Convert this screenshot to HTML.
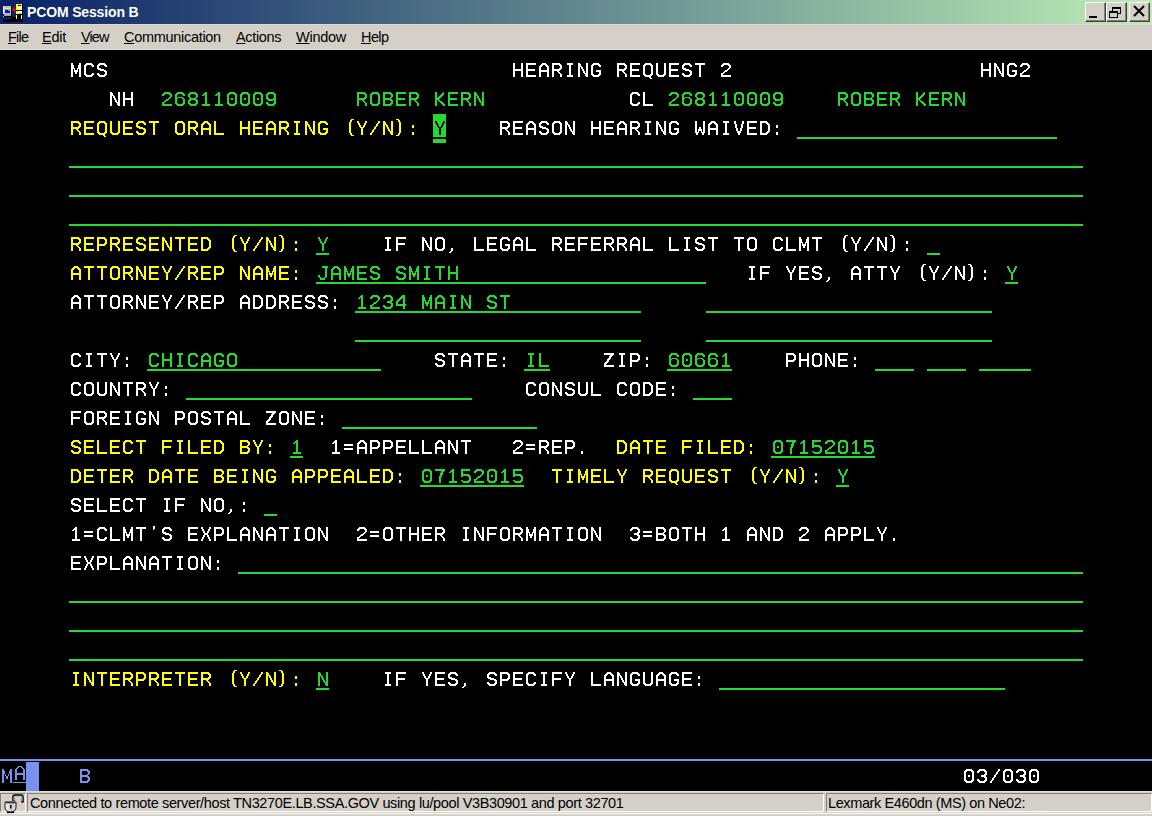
<!DOCTYPE html>
<html><head><meta charset="utf-8"><style>
*{margin:0;padding:0;box-sizing:border-box}
html,body{width:1152px;height:816px;overflow:hidden;background:#000;position:relative}
.title{position:absolute;left:0;top:0;width:1152px;height:24px;background:linear-gradient(to right,rgb(8,33,103),rgb(190,237,182))}
.ttxt{position:absolute;left:27px;top:4px;font:bold 14px "Liberation Sans",sans-serif;letter-spacing:-0.15px;color:#fff;white-space:pre}
.menu{position:absolute;left:0;top:24px;width:1152px;height:26px;background:#d4d0c8;border-top:1px solid #dedad2;border-bottom:1px solid #e6e3dd;font:14.5px "Liberation Sans",sans-serif;color:#000}
.menu span{position:absolute;top:4px;white-space:pre}
.menu u{text-decoration:underline}
.t{position:absolute;font:21.3px "Liberation Mono",sans-serif;letter-spacing:0.218px;text-rendering:geometricPrecision;line-height:29px;height:29px;white-space:pre;margin-top:2px}
.u{position:absolute;height:2px;background:#24d92f}
.cur{position:absolute;width:13px;background:#24d92f}
.status{position:absolute;left:0;top:791px;width:1152px;height:25px;background:#d4d0c8;border-top:1px solid #e2dfd8;font:14.5px "Liberation Sans",sans-serif;color:#000}
.pn{position:absolute;top:1px;height:19px;border-top:1px solid #808080;border-left:1px solid #808080;border-right:1px solid #fff;border-bottom:1px solid #fff}
.btn{position:absolute;top:2px;width:21px;height:20px;background:#d4d0c8;border-top:1px solid #fff;border-left:1px solid #fff;border-right:1px solid #404040;border-bottom:1px solid #404040;box-shadow:inset -1px -1px 0 #808080}
</style></head><body>
<div class="title">
<svg style="position:absolute;left:0;top:0" width="24" height="24" viewBox="0 0 24 24" shape-rendering="crispEdges">
<rect x="3" y="19" width="20" height="3" fill="#000"/>
<rect x="11" y="17" width="12" height="2" fill="#000"/>
<rect x="3" y="6" width="9" height="11" fill="#000"/>
<rect x="3" y="6" width="8" height="8" fill="#c8c4bc"/>
<rect x="3" y="6" width="1" height="8" fill="#f0f0f0"/>
<rect x="5" y="8" width="5" height="5" fill="#0000ff"/>
<rect x="5" y="8" width="5" height="1" fill="#ffffff"/>
<rect x="6" y="9" width="3" height="1" fill="#00ff00"/>
<rect x="8" y="9" width="2" height="2" fill="#00ff00"/>
<rect x="5" y="9" width="1" height="2" fill="#ff3000"/>
<rect x="4" y="14" width="7" height="2" fill="#a8a8a8"/>
<rect x="3" y="16" width="1" height="1" fill="#c0c0c0"/>
<path d="M12 10.5 L13.5 8 L14.5 11.5 L16 8.5" stroke="#ff0000" stroke-width="1.3" fill="none" shape-rendering="auto"/>
<rect x="16" y="4" width="7" height="15" fill="#000"/>
<rect x="16" y="4" width="6" height="6" fill="#ffff00"/>
<rect x="18" y="6" width="4" height="3" fill="#ffffff"/>
<rect x="18" y="5" width="3" height="1" fill="#000"/>
<rect x="16" y="11" width="6" height="3" fill="#ffff00"/>
<rect x="18" y="11" width="4" height="2" fill="#ffffff"/>
<rect x="19" y="13" width="2" height="1" fill="#00ff00"/>
<rect x="16" y="15" width="1" height="4" fill="#ffff00"/>
<rect x="21" y="15" width="1" height="4" fill="#ffff00"/>
<rect x="16" y="16" width="1" height="2" fill="#ffffff"/>
<rect x="21" y="16" width="1" height="2" fill="#ffffff"/>
</svg>
<div class="ttxt">PCOM Session B</div>
<div class="btn" style="left:1085px"><div style="position:absolute;left:3px;top:13px;width:8px;height:2px;background:#000"></div></div>
<div class="btn" style="left:1106px"><svg style="position:absolute;left:1px;top:3px" width="16" height="14" shape-rendering="crispEdges"><rect x="4" y="1" width="9" height="2" fill="#000"/><rect x="4" y="1" width="1" height="4" fill="#000"/><rect x="12" y="1" width="1" height="7" fill="#000"/><rect x="10" y="7" width="3" height="1" fill="#000"/><rect x="1" y="5" width="9" height="2" fill="#000"/><rect x="1" y="5" width="1" height="7" fill="#000"/><rect x="9" y="5" width="1" height="7" fill="#000"/><rect x="1" y="11" width="9" height="1" fill="#000"/></svg></div>
<div class="btn" style="left:1129px"><svg style="position:absolute;left:3px;top:2px" width="14" height="14"><path d="M1 1L11 11M11 1L1 11" stroke="#000" stroke-width="2" fill="none"/></svg></div>
</div>
<div class="menu">
<span style="left:8px;letter-spacing:-0.8px"><u>F</u>ile</span>
<span style="left:42px;letter-spacing:-0.2px"><u>E</u>dit</span>
<span style="left:81px;letter-spacing:-0.9px"><u>V</u>iew</span>
<span style="left:124px;letter-spacing:-0.3px"><u>C</u>ommunication</span>
<span style="left:236px;letter-spacing:-0.35px"><u>A</u>ctions</span>
<span style="left:296px;letter-spacing:-0.25px"><u>W</u>indow</span>
<span style="left:361px;letter-spacing:-0.6px"><u>H</u>elp</span>
</div>
<div class="u" style="top:137px;left:797px;width:260px"></div>
<div class="u" style="top:166px;left:69px;width:1014px"></div>
<div class="u" style="top:195px;left:69px;width:1014px"></div>
<div class="u" style="top:224px;left:69px;width:1014px"></div>
<div class="u" style="top:253px;left:316px;width:13px"></div>
<div class="u" style="top:253px;left:927px;width:13px"></div>
<div class="u" style="top:282px;left:316px;width:390px"></div>
<div class="u" style="top:282px;left:1005px;width:13px"></div>
<div class="u" style="top:311px;left:355px;width:286px"></div>
<div class="u" style="top:311px;left:706px;width:286px"></div>
<div class="u" style="top:340px;left:355px;width:286px"></div>
<div class="u" style="top:340px;left:706px;width:286px"></div>
<div class="u" style="top:369px;left:147px;width:234px"></div>
<div class="u" style="top:369px;left:524px;width:26px"></div>
<div class="u" style="top:369px;left:667px;width:65px"></div>
<div class="u" style="top:369px;left:875px;width:39px"></div>
<div class="u" style="top:369px;left:927px;width:39px"></div>
<div class="u" style="top:369px;left:979px;width:52px"></div>
<div class="u" style="top:398px;left:186px;width:286px"></div>
<div class="u" style="top:398px;left:693px;width:39px"></div>
<div class="u" style="top:427px;left:342px;width:195px"></div>
<div class="u" style="top:456px;left:290px;width:13px"></div>
<div class="u" style="top:456px;left:771px;width:104px"></div>
<div class="u" style="top:485px;left:420px;width:104px"></div>
<div class="u" style="top:485px;left:836px;width:13px"></div>
<div class="u" style="top:514px;left:264px;width:13px"></div>
<div class="u" style="top:572px;left:238px;width:845px"></div>
<div class="u" style="top:601px;left:69px;width:1014px"></div>
<div class="u" style="top:630px;left:69px;width:1014px"></div>
<div class="u" style="top:659px;left:69px;width:1014px"></div>
<div class="u" style="top:688px;left:316px;width:13px"></div>
<div class="u" style="top:688px;left:719px;width:286px"></div><div class="cur" style="top:114px;left:433px;height:23px"></div>
<div class="cur" style="top:139px;left:433px;height:4px"></div>
<div style="position:absolute;left:0;top:759px;width:1152px;height:2px;background:#7890ee"></div>
<div style="position:absolute;left:13px;top:782px;width:13px;height:1px;background:#7890ee"></div>
<div style="position:absolute;left:26px;top:762px;width:13px;height:29px;background:#7890ee"></div>
<svg style="position:absolute;left:0;top:0" width="1152" height="816" shape-rendering="crispEdges"><defs><symbol id="g39" overflow="visible"><path d="M4 -1h2v3h-2zM4 2h1v1h-1z"/></symbol><symbol id="g40" overflow="visible"><path d="M7 -2h3v1h-3zM7 14h3v1h-3zM6 -1h2v2h-2zM6 12h2v2h-2zM5 1h2v11h-2z"/></symbol><symbol id="g41" overflow="visible"><path d="M0 -2h3v1h-3zM0 14h3v1h-3zM2 -1h2v2h-2zM2 12h2v2h-2zM3 1h2v11h-2z"/></symbol><symbol id="g44" overflow="visible"><path d="M3 11h2v3h-2zM2 14h2v1h-2zM1 15h2v1h-2z"/></symbol><symbol id="g46" overflow="visible"><path d="M3 11h2v3h-2z"/></symbol><symbol id="g47" overflow="visible"><path d="M8 0h2v2h-2zM7 2h2v1h-2zM6 3h2v2h-2zM5 5h2v1h-2zM4 6h2v2h-2zM3 8h2v1h-2zM2 9h2v2h-2zM1 11h2v1h-2zM0 12h2v2h-2z"/></symbol><symbol id="g48" overflow="visible"><path d="M2 0h6v1h-6zM2 13h6v1h-6zM1 1h8v1h-8zM1 12h8v1h-8zM0 2h3v1h-3zM0 11h3v1h-3zM7 2h3v1h-3zM7 11h3v1h-3zM0 3h2v8h-2zM8 3h2v8h-2zM4 6h2v2h-2z"/></symbol><symbol id="g49" overflow="visible"><path d="M4 0h2v1h-2zM4 3h2v9h-2zM3 1h3v1h-3zM2 2h4v1h-4zM1 3h2v1h-2zM1 12h8v2h-8z"/></symbol><symbol id="g50" overflow="visible"><path d="M2 0h6v1h-6zM1 1h8v1h-8zM0 2h3v1h-3zM0 10h3v1h-3zM7 2h3v1h-3zM0 3h2v1h-2zM0 11h2v1h-2zM8 3h2v2h-2zM7 5h2v1h-2zM6 6h2v1h-2zM4 7h3v1h-3zM3 8h3v1h-3zM2 9h2v1h-2zM0 12h10v2h-10z"/></symbol><symbol id="g51" overflow="visible"><path d="M2 0h6v1h-6zM2 13h6v1h-6zM1 1h8v1h-8zM1 12h8v1h-8zM0 2h3v1h-3zM0 11h3v1h-3zM7 2h3v1h-3zM7 5h3v1h-3zM7 8h3v1h-3zM7 11h3v1h-3zM0 3h2v1h-2zM0 10h2v1h-2zM8 3h2v2h-2zM8 9h2v2h-2zM4 6h5v2h-5z"/></symbol><symbol id="g52" overflow="visible"><path d="M6 0h3v1h-3zM5 1h4v1h-4zM4 2h5v1h-5zM3 3h3v1h-3zM7 3h2v6h-2zM7 11h2v3h-2zM2 4h3v1h-3zM1 5h3v1h-3zM0 6h3v1h-3zM0 7h2v2h-2zM0 9h10v2h-10z"/></symbol><symbol id="g53" overflow="visible"><path d="M0 0h9v2h-9zM0 6h9v1h-9zM0 2h2v3h-2zM0 7h2v1h-2zM0 11h2v1h-2zM0 5h8v1h-8zM7 7h3v1h-3zM7 11h3v1h-3zM8 8h2v3h-2zM1 12h8v1h-8zM2 13h6v1h-6z"/></symbol><symbol id="g54" overflow="visible"><path d="M2 0h6v1h-6zM2 13h6v1h-6zM1 1h8v1h-8zM1 12h8v1h-8zM0 2h3v1h-3zM0 6h3v1h-3zM0 11h3v1h-3zM7 2h3v1h-3zM7 11h3v1h-3zM0 3h2v3h-2zM0 7h2v4h-2zM8 3h2v1h-2zM8 7h2v4h-2zM3 5h5v1h-5zM7 6h2v1h-2z"/></symbol><symbol id="g55" overflow="visible"><path d="M0 0h10v2h-10zM6 2h3v1h-3zM6 3h2v1h-2zM5 4h3v2h-3zM5 6h2v1h-2zM4 7h3v1h-3zM4 8h2v6h-2z"/></symbol><symbol id="g56" overflow="visible"><path d="M2 0h6v1h-6zM2 6h6v1h-6zM2 13h6v1h-6zM1 1h8v1h-8zM1 7h8v1h-8zM1 12h8v1h-8zM0 2h3v1h-3zM0 8h3v1h-3zM0 11h3v1h-3zM7 2h3v1h-3zM7 8h3v1h-3zM7 11h3v1h-3zM0 3h2v2h-2zM0 9h2v2h-2zM8 3h2v2h-2zM8 9h2v2h-2zM1 5h2v1h-2zM7 5h2v1h-2z"/></symbol><symbol id="g57" overflow="visible"><path d="M2 0h6v1h-6zM2 13h6v1h-6zM1 1h8v1h-8zM1 12h8v1h-8zM0 2h3v1h-3zM0 6h3v1h-3zM0 11h3v1h-3zM7 2h3v1h-3zM7 6h3v1h-3zM7 11h3v1h-3zM0 3h2v3h-2zM0 10h2v1h-2zM8 3h2v3h-2zM8 8h2v3h-2zM1 7h9v1h-9zM2 8h5v1h-5z"/></symbol><symbol id="g58" overflow="visible"><path d="M3 4h2v3h-2zM3 11h2v3h-2z"/></symbol><symbol id="g61" overflow="visible"><path d="M0 4h9v2h-9zM0 8h9v2h-9z"/></symbol><symbol id="g65" overflow="visible"><path d="M3 0h4v1h-4zM2 1h6v1h-6zM1 2h3v1h-3zM6 2h3v1h-3zM0 3h3v1h-3zM7 3h3v1h-3zM0 4h2v3h-2zM0 9h2v5h-2zM8 4h2v3h-2zM8 9h2v5h-2zM0 7h10v2h-10z"/></symbol><symbol id="g66" overflow="visible"><path d="M0 0h8v1h-8zM0 6h8v1h-8zM0 13h8v1h-8zM0 1h9v1h-9zM0 7h9v1h-9zM0 12h9v1h-9zM0 2h2v4h-2zM0 8h2v4h-2zM7 2h3v1h-3zM7 8h3v1h-3zM7 11h3v1h-3zM8 3h2v2h-2zM8 9h2v2h-2zM7 5h2v1h-2z"/></symbol><symbol id="g67" overflow="visible"><path d="M2 0h6v1h-6zM2 13h6v1h-6zM1 1h8v1h-8zM1 12h8v1h-8zM0 2h3v1h-3zM0 11h3v1h-3zM7 2h3v1h-3zM7 11h3v1h-3zM0 3h2v8h-2zM8 3h2v1h-2zM8 10h2v1h-2z"/></symbol><symbol id="g68" overflow="visible"><path d="M0 0h7v1h-7zM0 13h7v1h-7zM0 1h8v1h-8zM0 12h8v1h-8zM0 2h2v10h-2zM6 2h3v1h-3zM6 11h3v1h-3zM7 3h3v1h-3zM7 10h3v1h-3zM8 4h2v6h-2z"/></symbol><symbol id="g69" overflow="visible"><path d="M0 0h10v2h-10zM0 12h10v2h-10zM0 2h2v4h-2zM0 8h2v4h-2zM0 6h9v2h-9z"/></symbol><symbol id="g70" overflow="visible"><path d="M0 0h10v2h-10zM0 2h2v4h-2zM0 8h2v6h-2zM0 6h9v2h-9z"/></symbol><symbol id="g71" overflow="visible"><path d="M2 0h6v1h-6zM2 13h6v1h-6zM1 1h8v1h-8zM1 12h8v1h-8zM0 2h3v1h-3zM0 11h3v1h-3zM7 2h3v1h-3zM7 11h3v1h-3zM0 3h2v8h-2zM8 3h2v1h-2zM8 9h2v2h-2zM5 7h5v2h-5z"/></symbol><symbol id="g72" overflow="visible"><path d="M0 0h2v6h-2zM0 8h2v6h-2zM8 0h2v6h-2zM8 8h2v6h-2zM0 6h10v2h-10z"/></symbol><symbol id="g73" overflow="visible"><path d="M2 0h6v2h-6zM2 12h6v2h-6zM4 2h2v10h-2z"/></symbol><symbol id="g74" overflow="visible"><path d="M4 0h6v2h-6zM7 2h2v9h-2zM0 9h2v2h-2zM1 11h2v1h-2zM6 11h2v1h-2zM2 12h5v2h-5z"/></symbol><symbol id="g75" overflow="visible"><path d="M0 0h2v6h-2zM0 8h2v6h-2zM8 0h1v1h-1zM7 1h2v1h-2zM6 2h3v1h-3zM6 11h3v1h-3zM5 3h3v1h-3zM5 10h3v1h-3zM4 4h3v1h-3zM4 9h3v1h-3zM3 5h3v1h-3zM0 6h5v1h-5zM0 7h4v1h-4zM3 8h2v1h-2zM7 12h3v1h-3zM8 13h2v1h-2z"/></symbol><symbol id="g76" overflow="visible"><path d="M0 0h2v12h-2zM0 12h10v2h-10z"/></symbol><symbol id="g77" overflow="visible"><path d="M0 0h2v2h-2zM0 6h2v8h-2zM8 0h2v2h-2zM8 6h2v8h-2zM0 2h3v3h-3zM7 2h3v3h-3zM0 5h4v1h-4zM6 5h4v1h-4zM3 6h1v1h-1zM6 6h1v1h-1zM3 7h4v2h-4zM4 9h2v2h-2z"/></symbol><symbol id="g78" overflow="visible"><path d="M0 0h2v1h-2zM0 4h2v10h-2zM8 0h2v10h-2zM8 13h2v1h-2zM0 1h3v2h-3zM0 3h4v1h-4zM3 4h2v2h-2zM4 6h2v2h-2zM5 8h2v2h-2zM6 10h4v1h-4zM7 11h3v2h-3z"/></symbol><symbol id="g79" overflow="visible"><path d="M2 0h6v1h-6zM2 13h6v1h-6zM1 1h8v1h-8zM1 12h8v1h-8zM0 2h3v1h-3zM0 11h3v1h-3zM7 2h3v1h-3zM7 11h3v1h-3zM0 3h2v8h-2zM8 3h2v8h-2z"/></symbol><symbol id="g80" overflow="visible"><path d="M0 0h8v1h-8zM0 8h8v1h-8zM0 1h9v1h-9zM0 7h9v1h-9zM0 2h2v5h-2zM0 9h2v5h-2zM7 2h3v1h-3zM7 6h3v1h-3zM8 3h2v3h-2z"/></symbol><symbol id="g81" overflow="visible"><path d="M2 0h6v1h-6zM2 13h6v1h-6zM1 1h8v1h-8zM1 12h8v1h-8zM0 2h3v1h-3zM0 11h3v1h-3zM7 2h3v1h-3zM7 11h3v1h-3zM0 3h2v8h-2zM8 3h2v8h-2zM6 14h2v1h-2zM7 15h2v1h-2z"/></symbol><symbol id="g82" overflow="visible"><path d="M0 0h8v1h-8zM0 7h8v1h-8zM0 1h9v1h-9zM0 6h9v1h-9zM0 2h2v4h-2zM0 8h2v6h-2zM7 2h3v1h-3zM7 5h3v1h-3zM8 3h2v2h-2zM8 11h2v3h-2zM5 8h2v1h-2zM6 9h2v1h-2zM7 10h2v1h-2z"/></symbol><symbol id="g83" overflow="visible"><path d="M2 0h6v1h-6zM2 13h6v1h-6zM1 1h8v1h-8zM1 12h8v1h-8zM0 2h3v1h-3zM0 11h3v1h-3zM7 2h3v1h-3zM7 8h3v1h-3zM7 11h3v1h-3zM0 3h2v2h-2zM0 10h2v1h-2zM8 3h2v1h-2zM8 9h2v2h-2zM0 5h4v1h-4zM1 6h6v1h-6zM3 7h6v1h-6z"/></symbol><symbol id="g84" overflow="visible"><path d="M0 0h10v2h-10zM4 2h2v12h-2z"/></symbol><symbol id="g85" overflow="visible"><path d="M0 0h2v11h-2zM8 0h2v11h-2zM0 11h3v1h-3zM7 11h3v1h-3zM1 12h8v1h-8zM2 13h6v1h-6z"/></symbol><symbol id="g86" overflow="visible"><path d="M0 0h2v3h-2zM8 0h2v3h-2zM1 3h2v4h-2zM7 3h2v4h-2zM2 7h2v3h-2zM6 7h2v3h-2zM3 10h4v2h-4zM4 12h2v2h-2z"/></symbol><symbol id="g87" overflow="visible"><path d="M0 0h2v11h-2zM8 0h2v11h-2zM4 6h2v2h-2zM3 8h4v2h-4zM3 10h1v1h-1zM6 10h1v1h-1zM0 11h4v1h-4zM6 11h4v1h-4zM1 12h2v2h-2zM7 12h2v2h-2z"/></symbol><symbol id="g88" overflow="visible"><path d="M0 0h2v2h-2zM0 12h2v2h-2zM8 0h2v2h-2zM8 12h2v2h-2zM1 2h2v2h-2zM1 10h2v2h-2zM7 2h2v2h-2zM7 10h2v2h-2zM2 4h2v2h-2zM2 8h2v2h-2zM6 4h2v2h-2zM6 8h2v2h-2zM3 6h4v2h-4z"/></symbol><symbol id="g89" overflow="visible"><path d="M0 0h2v2h-2zM8 0h2v2h-2zM1 2h2v2h-2zM7 2h2v2h-2zM2 4h2v2h-2zM6 4h2v2h-2zM3 6h4v1h-4zM4 7h2v7h-2z"/></symbol><symbol id="g90" overflow="visible"><path d="M0 0h10v2h-10zM0 12h10v2h-10zM6 2h3v1h-3zM5 3h3v1h-3zM5 4h2v1h-2zM4 5h3v1h-3zM3 6h3v1h-3zM3 7h2v1h-2zM2 8h3v1h-3zM1 9h3v1h-3zM0 10h3v1h-3zM0 11h2v1h-2z"/></symbol><symbol id="g97" overflow="visible"><path d="M3 -3h4v1h-4zM2 -2h2v1h-2zM6 -2h2v1h-2zM1 -1h2v1h-2zM7 -1h2v1h-2zM0 0h2v4h-2zM0 6h2v5h-2zM8 0h2v4h-2zM8 6h2v5h-2zM0 4h10v2h-10z"/></symbol><symbol id="g109" overflow="visible"><path d="M0 0h2v2h-2zM0 5h2v9h-2zM8 0h2v2h-2zM8 5h2v9h-2zM0 2h3v3h-3zM7 2h3v3h-3zM3 5h1v2h-1zM6 5h1v2h-1zM4 7h2v3h-2z"/></symbol></defs><use href="#g77" x="71" y="63" fill="#ffffff"/><use href="#g67" x="84" y="63" fill="#ffffff"/><use href="#g83" x="97" y="63" fill="#ffffff"/><use href="#g72" x="513" y="63" fill="#ffffff"/><use href="#g69" x="526" y="63" fill="#ffffff"/><use href="#g65" x="539" y="63" fill="#ffffff"/><use href="#g82" x="552" y="63" fill="#ffffff"/><use href="#g73" x="565" y="63" fill="#ffffff"/><use href="#g78" x="578" y="63" fill="#ffffff"/><use href="#g71" x="591" y="63" fill="#ffffff"/><use href="#g82" x="617" y="63" fill="#ffffff"/><use href="#g69" x="630" y="63" fill="#ffffff"/><use href="#g81" x="643" y="63" fill="#ffffff"/><use href="#g85" x="656" y="63" fill="#ffffff"/><use href="#g69" x="669" y="63" fill="#ffffff"/><use href="#g83" x="682" y="63" fill="#ffffff"/><use href="#g84" x="695" y="63" fill="#ffffff"/><use href="#g50" x="721" y="63" fill="#ffffff"/><use href="#g72" x="981" y="63" fill="#ffffff"/><use href="#g78" x="994" y="63" fill="#ffffff"/><use href="#g71" x="1007" y="63" fill="#ffffff"/><use href="#g50" x="1020" y="63" fill="#ffffff"/><use href="#g78" x="110" y="92" fill="#ffffff"/><use href="#g72" x="123" y="92" fill="#ffffff"/><use href="#g50" x="162" y="92" fill="#24d92f"/><use href="#g54" x="175" y="92" fill="#24d92f"/><use href="#g56" x="188" y="92" fill="#24d92f"/><use href="#g49" x="201" y="92" fill="#24d92f"/><use href="#g49" x="214" y="92" fill="#24d92f"/><use href="#g48" x="227" y="92" fill="#24d92f"/><use href="#g48" x="240" y="92" fill="#24d92f"/><use href="#g48" x="253" y="92" fill="#24d92f"/><use href="#g57" x="266" y="92" fill="#24d92f"/><use href="#g82" x="357" y="92" fill="#24d92f"/><use href="#g79" x="370" y="92" fill="#24d92f"/><use href="#g66" x="383" y="92" fill="#24d92f"/><use href="#g69" x="396" y="92" fill="#24d92f"/><use href="#g82" x="409" y="92" fill="#24d92f"/><use href="#g75" x="435" y="92" fill="#24d92f"/><use href="#g69" x="448" y="92" fill="#24d92f"/><use href="#g82" x="461" y="92" fill="#24d92f"/><use href="#g78" x="474" y="92" fill="#24d92f"/><use href="#g67" x="630" y="92" fill="#ffffff"/><use href="#g76" x="643" y="92" fill="#ffffff"/><use href="#g50" x="669" y="92" fill="#24d92f"/><use href="#g54" x="682" y="92" fill="#24d92f"/><use href="#g56" x="695" y="92" fill="#24d92f"/><use href="#g49" x="708" y="92" fill="#24d92f"/><use href="#g49" x="721" y="92" fill="#24d92f"/><use href="#g48" x="734" y="92" fill="#24d92f"/><use href="#g48" x="747" y="92" fill="#24d92f"/><use href="#g48" x="760" y="92" fill="#24d92f"/><use href="#g57" x="773" y="92" fill="#24d92f"/><use href="#g82" x="838" y="92" fill="#24d92f"/><use href="#g79" x="851" y="92" fill="#24d92f"/><use href="#g66" x="864" y="92" fill="#24d92f"/><use href="#g69" x="877" y="92" fill="#24d92f"/><use href="#g82" x="890" y="92" fill="#24d92f"/><use href="#g75" x="916" y="92" fill="#24d92f"/><use href="#g69" x="929" y="92" fill="#24d92f"/><use href="#g82" x="942" y="92" fill="#24d92f"/><use href="#g78" x="955" y="92" fill="#24d92f"/><use href="#g82" x="71" y="121" fill="#ffff00"/><use href="#g69" x="84" y="121" fill="#ffff00"/><use href="#g81" x="97" y="121" fill="#ffff00"/><use href="#g85" x="110" y="121" fill="#ffff00"/><use href="#g69" x="123" y="121" fill="#ffff00"/><use href="#g83" x="136" y="121" fill="#ffff00"/><use href="#g84" x="149" y="121" fill="#ffff00"/><use href="#g79" x="175" y="121" fill="#ffff00"/><use href="#g82" x="188" y="121" fill="#ffff00"/><use href="#g65" x="201" y="121" fill="#ffff00"/><use href="#g76" x="214" y="121" fill="#ffff00"/><use href="#g72" x="240" y="121" fill="#ffff00"/><use href="#g69" x="253" y="121" fill="#ffff00"/><use href="#g65" x="266" y="121" fill="#ffff00"/><use href="#g82" x="279" y="121" fill="#ffff00"/><use href="#g73" x="292" y="121" fill="#ffff00"/><use href="#g78" x="305" y="121" fill="#ffff00"/><use href="#g71" x="318" y="121" fill="#ffff00"/><use href="#g40" x="344" y="121" fill="#ffff00"/><use href="#g89" x="357" y="121" fill="#ffff00"/><use href="#g47" x="370" y="121" fill="#ffff00"/><use href="#g78" x="383" y="121" fill="#ffff00"/><use href="#g41" x="396" y="121" fill="#ffff00"/><use href="#g58" x="409" y="121" fill="#ffff00"/><use href="#g82" x="500" y="121" fill="#ffffff"/><use href="#g69" x="513" y="121" fill="#ffffff"/><use href="#g65" x="526" y="121" fill="#ffffff"/><use href="#g83" x="539" y="121" fill="#ffffff"/><use href="#g79" x="552" y="121" fill="#ffffff"/><use href="#g78" x="565" y="121" fill="#ffffff"/><use href="#g72" x="591" y="121" fill="#ffffff"/><use href="#g69" x="604" y="121" fill="#ffffff"/><use href="#g65" x="617" y="121" fill="#ffffff"/><use href="#g82" x="630" y="121" fill="#ffffff"/><use href="#g73" x="643" y="121" fill="#ffffff"/><use href="#g78" x="656" y="121" fill="#ffffff"/><use href="#g71" x="669" y="121" fill="#ffffff"/><use href="#g87" x="695" y="121" fill="#ffffff"/><use href="#g65" x="708" y="121" fill="#ffffff"/><use href="#g73" x="721" y="121" fill="#ffffff"/><use href="#g86" x="734" y="121" fill="#ffffff"/><use href="#g69" x="747" y="121" fill="#ffffff"/><use href="#g68" x="760" y="121" fill="#ffffff"/><use href="#g58" x="773" y="121" fill="#ffffff"/><use href="#g82" x="71" y="237" fill="#ffff00"/><use href="#g69" x="84" y="237" fill="#ffff00"/><use href="#g80" x="97" y="237" fill="#ffff00"/><use href="#g82" x="110" y="237" fill="#ffff00"/><use href="#g69" x="123" y="237" fill="#ffff00"/><use href="#g83" x="136" y="237" fill="#ffff00"/><use href="#g69" x="149" y="237" fill="#ffff00"/><use href="#g78" x="162" y="237" fill="#ffff00"/><use href="#g84" x="175" y="237" fill="#ffff00"/><use href="#g69" x="188" y="237" fill="#ffff00"/><use href="#g68" x="201" y="237" fill="#ffff00"/><use href="#g40" x="227" y="237" fill="#ffff00"/><use href="#g89" x="240" y="237" fill="#ffff00"/><use href="#g47" x="253" y="237" fill="#ffff00"/><use href="#g78" x="266" y="237" fill="#ffff00"/><use href="#g41" x="279" y="237" fill="#ffff00"/><use href="#g58" x="292" y="237" fill="#ffff00"/><use href="#g89" x="318" y="237" fill="#24d92f"/><use href="#g73" x="383" y="237" fill="#ffffff"/><use href="#g70" x="396" y="237" fill="#ffffff"/><use href="#g78" x="422" y="237" fill="#ffffff"/><use href="#g79" x="435" y="237" fill="#ffffff"/><use href="#g44" x="448" y="237" fill="#ffffff"/><use href="#g76" x="474" y="237" fill="#ffffff"/><use href="#g69" x="487" y="237" fill="#ffffff"/><use href="#g71" x="500" y="237" fill="#ffffff"/><use href="#g65" x="513" y="237" fill="#ffffff"/><use href="#g76" x="526" y="237" fill="#ffffff"/><use href="#g82" x="552" y="237" fill="#ffffff"/><use href="#g69" x="565" y="237" fill="#ffffff"/><use href="#g70" x="578" y="237" fill="#ffffff"/><use href="#g69" x="591" y="237" fill="#ffffff"/><use href="#g82" x="604" y="237" fill="#ffffff"/><use href="#g82" x="617" y="237" fill="#ffffff"/><use href="#g65" x="630" y="237" fill="#ffffff"/><use href="#g76" x="643" y="237" fill="#ffffff"/><use href="#g76" x="669" y="237" fill="#ffffff"/><use href="#g73" x="682" y="237" fill="#ffffff"/><use href="#g83" x="695" y="237" fill="#ffffff"/><use href="#g84" x="708" y="237" fill="#ffffff"/><use href="#g84" x="734" y="237" fill="#ffffff"/><use href="#g79" x="747" y="237" fill="#ffffff"/><use href="#g67" x="773" y="237" fill="#ffffff"/><use href="#g76" x="786" y="237" fill="#ffffff"/><use href="#g77" x="799" y="237" fill="#ffffff"/><use href="#g84" x="812" y="237" fill="#ffffff"/><use href="#g40" x="838" y="237" fill="#ffffff"/><use href="#g89" x="851" y="237" fill="#ffffff"/><use href="#g47" x="864" y="237" fill="#ffffff"/><use href="#g78" x="877" y="237" fill="#ffffff"/><use href="#g41" x="890" y="237" fill="#ffffff"/><use href="#g58" x="903" y="237" fill="#ffffff"/><use href="#g65" x="71" y="266" fill="#ffff00"/><use href="#g84" x="84" y="266" fill="#ffff00"/><use href="#g84" x="97" y="266" fill="#ffff00"/><use href="#g79" x="110" y="266" fill="#ffff00"/><use href="#g82" x="123" y="266" fill="#ffff00"/><use href="#g78" x="136" y="266" fill="#ffff00"/><use href="#g69" x="149" y="266" fill="#ffff00"/><use href="#g89" x="162" y="266" fill="#ffff00"/><use href="#g47" x="175" y="266" fill="#ffff00"/><use href="#g82" x="188" y="266" fill="#ffff00"/><use href="#g69" x="201" y="266" fill="#ffff00"/><use href="#g80" x="214" y="266" fill="#ffff00"/><use href="#g78" x="240" y="266" fill="#ffff00"/><use href="#g65" x="253" y="266" fill="#ffff00"/><use href="#g77" x="266" y="266" fill="#ffff00"/><use href="#g69" x="279" y="266" fill="#ffff00"/><use href="#g58" x="292" y="266" fill="#ffff00"/><use href="#g74" x="318" y="266" fill="#24d92f"/><use href="#g65" x="331" y="266" fill="#24d92f"/><use href="#g77" x="344" y="266" fill="#24d92f"/><use href="#g69" x="357" y="266" fill="#24d92f"/><use href="#g83" x="370" y="266" fill="#24d92f"/><use href="#g83" x="396" y="266" fill="#24d92f"/><use href="#g77" x="409" y="266" fill="#24d92f"/><use href="#g73" x="422" y="266" fill="#24d92f"/><use href="#g84" x="435" y="266" fill="#24d92f"/><use href="#g72" x="448" y="266" fill="#24d92f"/><use href="#g73" x="747" y="266" fill="#ffffff"/><use href="#g70" x="760" y="266" fill="#ffffff"/><use href="#g89" x="786" y="266" fill="#ffffff"/><use href="#g69" x="799" y="266" fill="#ffffff"/><use href="#g83" x="812" y="266" fill="#ffffff"/><use href="#g44" x="825" y="266" fill="#ffffff"/><use href="#g65" x="851" y="266" fill="#ffffff"/><use href="#g84" x="864" y="266" fill="#ffffff"/><use href="#g84" x="877" y="266" fill="#ffffff"/><use href="#g89" x="890" y="266" fill="#ffffff"/><use href="#g40" x="916" y="266" fill="#ffffff"/><use href="#g89" x="929" y="266" fill="#ffffff"/><use href="#g47" x="942" y="266" fill="#ffffff"/><use href="#g78" x="955" y="266" fill="#ffffff"/><use href="#g41" x="968" y="266" fill="#ffffff"/><use href="#g58" x="981" y="266" fill="#ffffff"/><use href="#g89" x="1007" y="266" fill="#24d92f"/><use href="#g65" x="71" y="295" fill="#ffffff"/><use href="#g84" x="84" y="295" fill="#ffffff"/><use href="#g84" x="97" y="295" fill="#ffffff"/><use href="#g79" x="110" y="295" fill="#ffffff"/><use href="#g82" x="123" y="295" fill="#ffffff"/><use href="#g78" x="136" y="295" fill="#ffffff"/><use href="#g69" x="149" y="295" fill="#ffffff"/><use href="#g89" x="162" y="295" fill="#ffffff"/><use href="#g47" x="175" y="295" fill="#ffffff"/><use href="#g82" x="188" y="295" fill="#ffffff"/><use href="#g69" x="201" y="295" fill="#ffffff"/><use href="#g80" x="214" y="295" fill="#ffffff"/><use href="#g65" x="240" y="295" fill="#ffffff"/><use href="#g68" x="253" y="295" fill="#ffffff"/><use href="#g68" x="266" y="295" fill="#ffffff"/><use href="#g82" x="279" y="295" fill="#ffffff"/><use href="#g69" x="292" y="295" fill="#ffffff"/><use href="#g83" x="305" y="295" fill="#ffffff"/><use href="#g83" x="318" y="295" fill="#ffffff"/><use href="#g58" x="331" y="295" fill="#ffffff"/><use href="#g49" x="357" y="295" fill="#24d92f"/><use href="#g50" x="370" y="295" fill="#24d92f"/><use href="#g51" x="383" y="295" fill="#24d92f"/><use href="#g52" x="396" y="295" fill="#24d92f"/><use href="#g77" x="422" y="295" fill="#24d92f"/><use href="#g65" x="435" y="295" fill="#24d92f"/><use href="#g73" x="448" y="295" fill="#24d92f"/><use href="#g78" x="461" y="295" fill="#24d92f"/><use href="#g83" x="487" y="295" fill="#24d92f"/><use href="#g84" x="500" y="295" fill="#24d92f"/><use href="#g67" x="71" y="353" fill="#ffffff"/><use href="#g73" x="84" y="353" fill="#ffffff"/><use href="#g84" x="97" y="353" fill="#ffffff"/><use href="#g89" x="110" y="353" fill="#ffffff"/><use href="#g58" x="123" y="353" fill="#ffffff"/><use href="#g67" x="149" y="353" fill="#24d92f"/><use href="#g72" x="162" y="353" fill="#24d92f"/><use href="#g73" x="175" y="353" fill="#24d92f"/><use href="#g67" x="188" y="353" fill="#24d92f"/><use href="#g65" x="201" y="353" fill="#24d92f"/><use href="#g71" x="214" y="353" fill="#24d92f"/><use href="#g79" x="227" y="353" fill="#24d92f"/><use href="#g83" x="435" y="353" fill="#ffffff"/><use href="#g84" x="448" y="353" fill="#ffffff"/><use href="#g65" x="461" y="353" fill="#ffffff"/><use href="#g84" x="474" y="353" fill="#ffffff"/><use href="#g69" x="487" y="353" fill="#ffffff"/><use href="#g58" x="500" y="353" fill="#ffffff"/><use href="#g73" x="526" y="353" fill="#24d92f"/><use href="#g76" x="539" y="353" fill="#24d92f"/><use href="#g90" x="604" y="353" fill="#ffffff"/><use href="#g73" x="617" y="353" fill="#ffffff"/><use href="#g80" x="630" y="353" fill="#ffffff"/><use href="#g58" x="643" y="353" fill="#ffffff"/><use href="#g54" x="669" y="353" fill="#24d92f"/><use href="#g48" x="682" y="353" fill="#24d92f"/><use href="#g54" x="695" y="353" fill="#24d92f"/><use href="#g54" x="708" y="353" fill="#24d92f"/><use href="#g49" x="721" y="353" fill="#24d92f"/><use href="#g80" x="786" y="353" fill="#ffffff"/><use href="#g72" x="799" y="353" fill="#ffffff"/><use href="#g79" x="812" y="353" fill="#ffffff"/><use href="#g78" x="825" y="353" fill="#ffffff"/><use href="#g69" x="838" y="353" fill="#ffffff"/><use href="#g58" x="851" y="353" fill="#ffffff"/><use href="#g67" x="71" y="382" fill="#ffffff"/><use href="#g79" x="84" y="382" fill="#ffffff"/><use href="#g85" x="97" y="382" fill="#ffffff"/><use href="#g78" x="110" y="382" fill="#ffffff"/><use href="#g84" x="123" y="382" fill="#ffffff"/><use href="#g82" x="136" y="382" fill="#ffffff"/><use href="#g89" x="149" y="382" fill="#ffffff"/><use href="#g58" x="162" y="382" fill="#ffffff"/><use href="#g67" x="526" y="382" fill="#ffffff"/><use href="#g79" x="539" y="382" fill="#ffffff"/><use href="#g78" x="552" y="382" fill="#ffffff"/><use href="#g83" x="565" y="382" fill="#ffffff"/><use href="#g85" x="578" y="382" fill="#ffffff"/><use href="#g76" x="591" y="382" fill="#ffffff"/><use href="#g67" x="617" y="382" fill="#ffffff"/><use href="#g79" x="630" y="382" fill="#ffffff"/><use href="#g68" x="643" y="382" fill="#ffffff"/><use href="#g69" x="656" y="382" fill="#ffffff"/><use href="#g58" x="669" y="382" fill="#ffffff"/><use href="#g70" x="71" y="411" fill="#ffffff"/><use href="#g79" x="84" y="411" fill="#ffffff"/><use href="#g82" x="97" y="411" fill="#ffffff"/><use href="#g69" x="110" y="411" fill="#ffffff"/><use href="#g73" x="123" y="411" fill="#ffffff"/><use href="#g71" x="136" y="411" fill="#ffffff"/><use href="#g78" x="149" y="411" fill="#ffffff"/><use href="#g80" x="175" y="411" fill="#ffffff"/><use href="#g79" x="188" y="411" fill="#ffffff"/><use href="#g83" x="201" y="411" fill="#ffffff"/><use href="#g84" x="214" y="411" fill="#ffffff"/><use href="#g65" x="227" y="411" fill="#ffffff"/><use href="#g76" x="240" y="411" fill="#ffffff"/><use href="#g90" x="266" y="411" fill="#ffffff"/><use href="#g79" x="279" y="411" fill="#ffffff"/><use href="#g78" x="292" y="411" fill="#ffffff"/><use href="#g69" x="305" y="411" fill="#ffffff"/><use href="#g58" x="318" y="411" fill="#ffffff"/><use href="#g83" x="71" y="440" fill="#ffff00"/><use href="#g69" x="84" y="440" fill="#ffff00"/><use href="#g76" x="97" y="440" fill="#ffff00"/><use href="#g69" x="110" y="440" fill="#ffff00"/><use href="#g67" x="123" y="440" fill="#ffff00"/><use href="#g84" x="136" y="440" fill="#ffff00"/><use href="#g70" x="162" y="440" fill="#ffff00"/><use href="#g73" x="175" y="440" fill="#ffff00"/><use href="#g76" x="188" y="440" fill="#ffff00"/><use href="#g69" x="201" y="440" fill="#ffff00"/><use href="#g68" x="214" y="440" fill="#ffff00"/><use href="#g66" x="240" y="440" fill="#ffff00"/><use href="#g89" x="253" y="440" fill="#ffff00"/><use href="#g58" x="266" y="440" fill="#ffff00"/><use href="#g49" x="292" y="440" fill="#24d92f"/><use href="#g49" x="331" y="440" fill="#ffffff"/><use href="#g61" x="344" y="440" fill="#ffffff"/><use href="#g65" x="357" y="440" fill="#ffffff"/><use href="#g80" x="370" y="440" fill="#ffffff"/><use href="#g80" x="383" y="440" fill="#ffffff"/><use href="#g69" x="396" y="440" fill="#ffffff"/><use href="#g76" x="409" y="440" fill="#ffffff"/><use href="#g76" x="422" y="440" fill="#ffffff"/><use href="#g65" x="435" y="440" fill="#ffffff"/><use href="#g78" x="448" y="440" fill="#ffffff"/><use href="#g84" x="461" y="440" fill="#ffffff"/><use href="#g50" x="513" y="440" fill="#ffffff"/><use href="#g61" x="526" y="440" fill="#ffffff"/><use href="#g82" x="539" y="440" fill="#ffffff"/><use href="#g69" x="552" y="440" fill="#ffffff"/><use href="#g80" x="565" y="440" fill="#ffffff"/><use href="#g46" x="578" y="440" fill="#ffffff"/><use href="#g68" x="617" y="440" fill="#ffff00"/><use href="#g65" x="630" y="440" fill="#ffff00"/><use href="#g84" x="643" y="440" fill="#ffff00"/><use href="#g69" x="656" y="440" fill="#ffff00"/><use href="#g70" x="682" y="440" fill="#ffff00"/><use href="#g73" x="695" y="440" fill="#ffff00"/><use href="#g76" x="708" y="440" fill="#ffff00"/><use href="#g69" x="721" y="440" fill="#ffff00"/><use href="#g68" x="734" y="440" fill="#ffff00"/><use href="#g58" x="747" y="440" fill="#ffff00"/><use href="#g48" x="773" y="440" fill="#24d92f"/><use href="#g55" x="786" y="440" fill="#24d92f"/><use href="#g49" x="799" y="440" fill="#24d92f"/><use href="#g53" x="812" y="440" fill="#24d92f"/><use href="#g50" x="825" y="440" fill="#24d92f"/><use href="#g48" x="838" y="440" fill="#24d92f"/><use href="#g49" x="851" y="440" fill="#24d92f"/><use href="#g53" x="864" y="440" fill="#24d92f"/><use href="#g68" x="71" y="469" fill="#ffff00"/><use href="#g69" x="84" y="469" fill="#ffff00"/><use href="#g84" x="97" y="469" fill="#ffff00"/><use href="#g69" x="110" y="469" fill="#ffff00"/><use href="#g82" x="123" y="469" fill="#ffff00"/><use href="#g68" x="149" y="469" fill="#ffff00"/><use href="#g65" x="162" y="469" fill="#ffff00"/><use href="#g84" x="175" y="469" fill="#ffff00"/><use href="#g69" x="188" y="469" fill="#ffff00"/><use href="#g66" x="214" y="469" fill="#ffff00"/><use href="#g69" x="227" y="469" fill="#ffff00"/><use href="#g73" x="240" y="469" fill="#ffff00"/><use href="#g78" x="253" y="469" fill="#ffff00"/><use href="#g71" x="266" y="469" fill="#ffff00"/><use href="#g65" x="292" y="469" fill="#ffff00"/><use href="#g80" x="305" y="469" fill="#ffff00"/><use href="#g80" x="318" y="469" fill="#ffff00"/><use href="#g69" x="331" y="469" fill="#ffff00"/><use href="#g65" x="344" y="469" fill="#ffff00"/><use href="#g76" x="357" y="469" fill="#ffff00"/><use href="#g69" x="370" y="469" fill="#ffff00"/><use href="#g68" x="383" y="469" fill="#ffff00"/><use href="#g58" x="396" y="469" fill="#ffff00"/><use href="#g48" x="422" y="469" fill="#24d92f"/><use href="#g55" x="435" y="469" fill="#24d92f"/><use href="#g49" x="448" y="469" fill="#24d92f"/><use href="#g53" x="461" y="469" fill="#24d92f"/><use href="#g50" x="474" y="469" fill="#24d92f"/><use href="#g48" x="487" y="469" fill="#24d92f"/><use href="#g49" x="500" y="469" fill="#24d92f"/><use href="#g53" x="513" y="469" fill="#24d92f"/><use href="#g84" x="552" y="469" fill="#ffff00"/><use href="#g73" x="565" y="469" fill="#ffff00"/><use href="#g77" x="578" y="469" fill="#ffff00"/><use href="#g69" x="591" y="469" fill="#ffff00"/><use href="#g76" x="604" y="469" fill="#ffff00"/><use href="#g89" x="617" y="469" fill="#ffff00"/><use href="#g82" x="643" y="469" fill="#ffff00"/><use href="#g69" x="656" y="469" fill="#ffff00"/><use href="#g81" x="669" y="469" fill="#ffff00"/><use href="#g85" x="682" y="469" fill="#ffff00"/><use href="#g69" x="695" y="469" fill="#ffff00"/><use href="#g83" x="708" y="469" fill="#ffff00"/><use href="#g84" x="721" y="469" fill="#ffff00"/><use href="#g40" x="747" y="469" fill="#ffff00"/><use href="#g89" x="760" y="469" fill="#ffff00"/><use href="#g47" x="773" y="469" fill="#ffff00"/><use href="#g78" x="786" y="469" fill="#ffff00"/><use href="#g41" x="799" y="469" fill="#ffff00"/><use href="#g58" x="812" y="469" fill="#ffff00"/><use href="#g89" x="838" y="469" fill="#24d92f"/><use href="#g83" x="71" y="498" fill="#ffffff"/><use href="#g69" x="84" y="498" fill="#ffffff"/><use href="#g76" x="97" y="498" fill="#ffffff"/><use href="#g69" x="110" y="498" fill="#ffffff"/><use href="#g67" x="123" y="498" fill="#ffffff"/><use href="#g84" x="136" y="498" fill="#ffffff"/><use href="#g73" x="162" y="498" fill="#ffffff"/><use href="#g70" x="175" y="498" fill="#ffffff"/><use href="#g78" x="201" y="498" fill="#ffffff"/><use href="#g79" x="214" y="498" fill="#ffffff"/><use href="#g44" x="227" y="498" fill="#ffffff"/><use href="#g58" x="240" y="498" fill="#ffffff"/><use href="#g49" x="71" y="527" fill="#ffffff"/><use href="#g61" x="84" y="527" fill="#ffffff"/><use href="#g67" x="97" y="527" fill="#ffffff"/><use href="#g76" x="110" y="527" fill="#ffffff"/><use href="#g77" x="123" y="527" fill="#ffffff"/><use href="#g84" x="136" y="527" fill="#ffffff"/><use href="#g39" x="149" y="527" fill="#ffffff"/><use href="#g83" x="162" y="527" fill="#ffffff"/><use href="#g69" x="188" y="527" fill="#ffffff"/><use href="#g88" x="201" y="527" fill="#ffffff"/><use href="#g80" x="214" y="527" fill="#ffffff"/><use href="#g76" x="227" y="527" fill="#ffffff"/><use href="#g65" x="240" y="527" fill="#ffffff"/><use href="#g78" x="253" y="527" fill="#ffffff"/><use href="#g65" x="266" y="527" fill="#ffffff"/><use href="#g84" x="279" y="527" fill="#ffffff"/><use href="#g73" x="292" y="527" fill="#ffffff"/><use href="#g79" x="305" y="527" fill="#ffffff"/><use href="#g78" x="318" y="527" fill="#ffffff"/><use href="#g50" x="357" y="527" fill="#ffffff"/><use href="#g61" x="370" y="527" fill="#ffffff"/><use href="#g79" x="383" y="527" fill="#ffffff"/><use href="#g84" x="396" y="527" fill="#ffffff"/><use href="#g72" x="409" y="527" fill="#ffffff"/><use href="#g69" x="422" y="527" fill="#ffffff"/><use href="#g82" x="435" y="527" fill="#ffffff"/><use href="#g73" x="461" y="527" fill="#ffffff"/><use href="#g78" x="474" y="527" fill="#ffffff"/><use href="#g70" x="487" y="527" fill="#ffffff"/><use href="#g79" x="500" y="527" fill="#ffffff"/><use href="#g82" x="513" y="527" fill="#ffffff"/><use href="#g77" x="526" y="527" fill="#ffffff"/><use href="#g65" x="539" y="527" fill="#ffffff"/><use href="#g84" x="552" y="527" fill="#ffffff"/><use href="#g73" x="565" y="527" fill="#ffffff"/><use href="#g79" x="578" y="527" fill="#ffffff"/><use href="#g78" x="591" y="527" fill="#ffffff"/><use href="#g51" x="630" y="527" fill="#ffffff"/><use href="#g61" x="643" y="527" fill="#ffffff"/><use href="#g66" x="656" y="527" fill="#ffffff"/><use href="#g79" x="669" y="527" fill="#ffffff"/><use href="#g84" x="682" y="527" fill="#ffffff"/><use href="#g72" x="695" y="527" fill="#ffffff"/><use href="#g49" x="721" y="527" fill="#ffffff"/><use href="#g65" x="747" y="527" fill="#ffffff"/><use href="#g78" x="760" y="527" fill="#ffffff"/><use href="#g68" x="773" y="527" fill="#ffffff"/><use href="#g50" x="799" y="527" fill="#ffffff"/><use href="#g65" x="825" y="527" fill="#ffffff"/><use href="#g80" x="838" y="527" fill="#ffffff"/><use href="#g80" x="851" y="527" fill="#ffffff"/><use href="#g76" x="864" y="527" fill="#ffffff"/><use href="#g89" x="877" y="527" fill="#ffffff"/><use href="#g46" x="890" y="527" fill="#ffffff"/><use href="#g69" x="71" y="556" fill="#ffffff"/><use href="#g88" x="84" y="556" fill="#ffffff"/><use href="#g80" x="97" y="556" fill="#ffffff"/><use href="#g76" x="110" y="556" fill="#ffffff"/><use href="#g65" x="123" y="556" fill="#ffffff"/><use href="#g78" x="136" y="556" fill="#ffffff"/><use href="#g65" x="149" y="556" fill="#ffffff"/><use href="#g84" x="162" y="556" fill="#ffffff"/><use href="#g73" x="175" y="556" fill="#ffffff"/><use href="#g79" x="188" y="556" fill="#ffffff"/><use href="#g78" x="201" y="556" fill="#ffffff"/><use href="#g58" x="214" y="556" fill="#ffffff"/><use href="#g73" x="71" y="672" fill="#ffff00"/><use href="#g78" x="84" y="672" fill="#ffff00"/><use href="#g84" x="97" y="672" fill="#ffff00"/><use href="#g69" x="110" y="672" fill="#ffff00"/><use href="#g82" x="123" y="672" fill="#ffff00"/><use href="#g80" x="136" y="672" fill="#ffff00"/><use href="#g82" x="149" y="672" fill="#ffff00"/><use href="#g69" x="162" y="672" fill="#ffff00"/><use href="#g84" x="175" y="672" fill="#ffff00"/><use href="#g69" x="188" y="672" fill="#ffff00"/><use href="#g82" x="201" y="672" fill="#ffff00"/><use href="#g40" x="227" y="672" fill="#ffff00"/><use href="#g89" x="240" y="672" fill="#ffff00"/><use href="#g47" x="253" y="672" fill="#ffff00"/><use href="#g78" x="266" y="672" fill="#ffff00"/><use href="#g41" x="279" y="672" fill="#ffff00"/><use href="#g58" x="292" y="672" fill="#ffff00"/><use href="#g78" x="318" y="672" fill="#24d92f"/><use href="#g73" x="383" y="672" fill="#ffffff"/><use href="#g70" x="396" y="672" fill="#ffffff"/><use href="#g89" x="422" y="672" fill="#ffffff"/><use href="#g69" x="435" y="672" fill="#ffffff"/><use href="#g83" x="448" y="672" fill="#ffffff"/><use href="#g44" x="461" y="672" fill="#ffffff"/><use href="#g83" x="487" y="672" fill="#ffffff"/><use href="#g80" x="500" y="672" fill="#ffffff"/><use href="#g69" x="513" y="672" fill="#ffffff"/><use href="#g67" x="526" y="672" fill="#ffffff"/><use href="#g73" x="539" y="672" fill="#ffffff"/><use href="#g70" x="552" y="672" fill="#ffffff"/><use href="#g89" x="565" y="672" fill="#ffffff"/><use href="#g76" x="591" y="672" fill="#ffffff"/><use href="#g65" x="604" y="672" fill="#ffffff"/><use href="#g78" x="617" y="672" fill="#ffffff"/><use href="#g71" x="630" y="672" fill="#ffffff"/><use href="#g85" x="643" y="672" fill="#ffffff"/><use href="#g65" x="656" y="672" fill="#ffffff"/><use href="#g71" x="669" y="672" fill="#ffffff"/><use href="#g69" x="682" y="672" fill="#ffffff"/><use href="#g58" x="695" y="672" fill="#ffffff"/><use href="#g89" x="435" y="121" fill="#000000"/><use href="#g109" x="2" y="769" fill="#7890ee"/><use href="#g97" x="15" y="769" fill="#7890ee"/><use href="#g66" x="80" y="769" fill="#7890ee"/><use href="#g48" x="964" y="769" fill="#ffffff"/><use href="#g51" x="977" y="769" fill="#ffffff"/><use href="#g47" x="990" y="769" fill="#ffffff"/><use href="#g48" x="1003" y="769" fill="#ffffff"/><use href="#g51" x="1016" y="769" fill="#ffffff"/><use href="#g48" x="1029" y="769" fill="#ffffff"/></svg>
<div class="status">
<div class="pn" style="left:0px;width:26px"></div><div class="pn" style="left:27px;width:797px"></div><div class="pn" style="left:826px;width:326px"></div>
<svg style="position:absolute;left:0;top:-1px" width="28" height="26" viewBox="0 0 28 26">
<defs><linearGradient id="lg" x1="0" y1="0" x2="1" y2="0"><stop offset="0" stop-color="#f8f8f8"/><stop offset="0.6" stop-color="#c8c8c8"/><stop offset="1" stop-color="#e0e0e0"/></linearGradient></defs>
<path d="M13.5 10 V6 Q13.5 4.5 15 4.5 H21 Q22.5 4.5 22.5 6 V11.5" stroke="#000" stroke-width="2.6" fill="none"/>
<path d="M14 9.5 V6.5 Q14 5.2 15.2 5.2 H20.8 Q22 5.2 22 6.5 V10" stroke="#e8e8e8" stroke-width="1.1" fill="none"/>
<rect x="7" y="19.5" width="7" height="2.5" fill="#000"/>
<path d="M5 11 H16 V16 Q16 21 10.5 21 Q5 21 5 16 Z" fill="url(#lg)" stroke="#000" stroke-width="0.9"/>
<rect x="6" y="11" width="9" height="1.3" fill="#303030"/>
<rect x="10" y="14" width="1.5" height="3.5" fill="#000"/>
</svg>
<span style="position:absolute;left:30px;top:3px;white-space:pre;letter-spacing:-0.37px">Connected to remote server/host TN3270E.LB.SSA.GOV using lu/pool V3B30901 and port 32701</span>
<span style="position:absolute;left:828px;top:3px;white-space:pre;letter-spacing:-0.39px">Lexmark E460dn (MS) on Ne02:</span>
<div style="position:absolute;left:0;top:21px;width:1152px;height:1px;background:#fff"></div>
</div>
</body></html>
